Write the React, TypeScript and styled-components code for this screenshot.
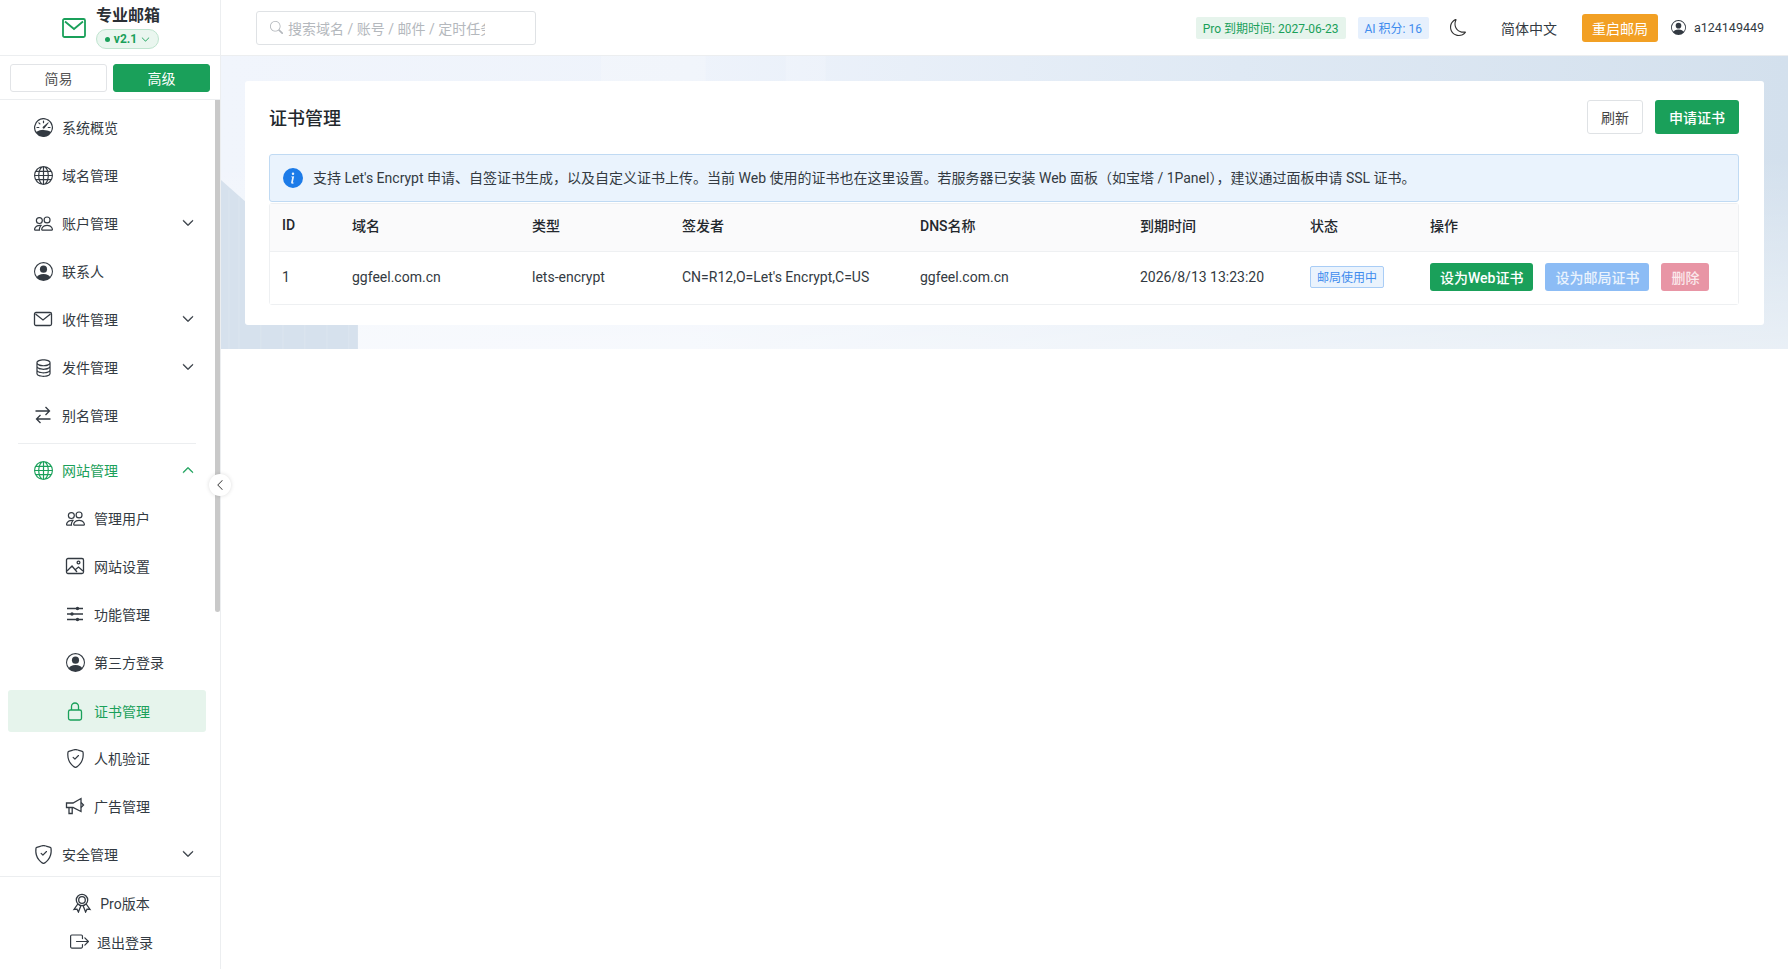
import { ReactNode } from "react";
import styled, { createGlobalStyle } from "styled-components";
import {
  BsBoxArrowRight,
  BsChevronDown,
  BsChevronLeft,
  BsChevronUp,
  BsDatabase,
  BsGlobe,
  BsInfoCircleFill,
  BsMoon,
  BsPeople,
  BsPersonCircle,
  BsSearch,
  BsShieldCheck,
  BsSpeedometer,
} from "react-icons/bs";

const GREEN = "#1aa05a";
const TEXT = "#333a42";

const GlobalStyle = createGlobalStyle`
  html, body, #root {
    margin: 0;
    height: 100%;
  }
  body {
    background: #fff;
    color: ${TEXT};
    font-family: Roboto, "Noto Sans CJK SC", sans-serif;
    font-size: 14px;
  }
  * {
    box-sizing: border-box;
  }
`;

const Page = styled.div`
  display: flex;
  height: 969px;
  overflow: hidden;
`;

// 左侧导航
const Sidebar = styled.aside`
  position: relative;
  flex: 0 0 220px;
  display: flex;
  flex-direction: column;
  border-right: 1px solid #eceef0;
`;

const Brand = styled.div`
  height: 56px;
  display: flex;
  align-items: center;
  padding-left: 62px;
  gap: 10px;
  border-bottom: 1px solid #eceef0;
`;

const BrandText = styled.div`
  display: flex;
  flex-direction: column;
  gap: 2px;
`;

const BrandName = styled.div`
  font-size: 16px;
  line-height: 22px;
  font-weight: 700;
  color: #2a2f35;
  margin-top: -1px;
`;

const VersionPill = styled.div`
  width: 63px;
  height: 20px;
  display: flex;
  align-items: center;
  justify-content: center;
  gap: 4px;
  font-size: 12px;
  font-weight: 700;
  color: ${GREEN};
  background: #eaf6ef;
  border: 1px solid #bfe4cf;
  border-radius: 10px;
`;

const Dot = styled.span`
  width: 5px;
  height: 5px;
  border-radius: 50%;
  background: ${GREEN};
`;

const ModeBar = styled.div`
  height: 44px;
  display: flex;
  gap: 6px;
  padding: 8px 10px 0;
  border-bottom: 1px solid #eceef0;
`;

const ModeButton = styled.div<{ $active?: boolean }>`
  width: 97px;
  height: 28px;
  display: flex;
  align-items: center;
  justify-content: center;
  border-radius: 3px;
  background: ${(p) => (p.$active ? GREEN : "#fff")};
  color: ${(p) => (p.$active ? "#fff" : "#555")};
  border: 1px solid ${(p) => (p.$active ? GREEN : "#e2e4e7")};
`;

const Nav = styled.nav`
  position: relative;
  flex: 1;
  min-height: 0;
  overflow: hidden;
  padding-top: 3px;
`;

const Scrollbar = styled.div`
  position: absolute;
  top: 0;
  right: 0;
  width: 5px;
  height: 512px;
  background: #c9c9c9;
  border-radius: 0 0 3px 3px;
`;

const NavItem = styled.div<{ $active?: boolean; $sub?: boolean }>`
  height: 48px;
  display: flex;
  align-items: center;
  gap: 9px;
  padding-left: ${(p) => (p.$sub ? "65px" : "33px")};
  padding-right: 26px;
  color: ${(p) => (p.$active ? GREEN : TEXT)};
`;

const ActiveSlot = styled.div`
  height: 42px;
  margin: 4px 14px 2px 8px;
  display: flex;
  align-items: center;
  gap: 9px;
  padding: 0 0 1px 57px;
  background: #e6f4ec;
  border-radius: 3px;
  color: ${GREEN};
`;

const IconBox = styled.span`
  width: 20px;
  height: 20px;
  display: inline-flex;
  align-items: center;
  justify-content: center;
  font-size: 19px;
  flex-shrink: 0;
`;

const Chevron = styled.span`
  margin-left: auto;
  display: inline-flex;
  font-size: 12px;

  svg {
    stroke: currentColor;
    stroke-width: 1;
  }
`;

const NavDivider = styled.div`
  height: 1px;
  margin: 4px 24px 2px 18px;
  background: #eceef0;
`;

const SideFooter = styled.div`
  height: 93px;
  flex-shrink: 0;
  border-top: 1px solid #eceef0;
  display: flex;
  flex-direction: column;
  align-items: center;
  padding-top: 6px;
`;

const FooterLink = styled.div`
  height: 39px;
  display: flex;
  align-items: center;
  gap: 8px;
  padding-left: 2px;
`;

const CollapseToggle = styled.div`
  position: absolute;
  left: 209px;
  top: 474px;
  width: 22px;
  height: 22px;
  border-radius: 50%;
  background: #fff;
  box-shadow: 0 0 4px rgba(0, 0, 0, 0.14);
  display: flex;
  align-items: center;
  justify-content: center;
  font-size: 12px;
  color: #333;
`;

// 主区域
const Main = styled.main`
  flex: 1;
  min-width: 0;
  display: flex;
  flex-direction: column;
`;

const Header = styled.header`
  height: 56px;
  flex-shrink: 0;
  display: flex;
  align-items: center;
  padding: 0 24px 0 35px;
  border-bottom: 1px solid #eceef0;
`;

const SearchBox = styled.div`
  width: 280px;
  height: 34px;
  display: flex;
  align-items: center;
  gap: 5px;
  padding-left: 13px;
  border: 1px solid #dfe2e5;
  border-radius: 3px;
  color: #b4b8bd;
`;

const SearchText = styled.span`
  width: 197px;
  overflow: hidden;
  white-space: nowrap;
`;

const HeaderRight = styled.div`
  margin-left: auto;
  display: flex;
  align-items: center;
`;

const Tag = styled.span<{ $bg: string; $fg: string }>`
  height: 22px;
  display: inline-flex;
  align-items: center;
  padding: 0 7px;
  font-size: 12px;
  border-radius: 2px;
  background: ${(p) => p.$bg};
  color: ${(p) => p.$fg};
  margin-right: 12px;
`;

const Moon = styled.span`
  display: inline-flex;
  font-size: 17px;
  color: #333;
  margin: 0 34px 0 9px;
`;

const Lang = styled.span`
  margin-right: 25px;
`;

const RestartButton = styled.div`
  width: 76px;
  height: 28px;
  display: flex;
  align-items: center;
  justify-content: center;
  background: #f2a024;
  color: #fff;
  border-radius: 3px;
  margin-right: 13px;
`;

const UserBox = styled.div`
  display: flex;
  align-items: center;
  gap: 8px;
  font-size: 12.5px;
`;

const Hero = styled.section`
  position: relative;
  padding: 25px 24px 24px 24px;
  background:
    linear-gradient(180deg, rgba(255, 255, 255, 0) 35%, rgba(255, 255, 255, 0.5) 100%),
    linear-gradient(90deg, #f1f5fc 0%, #eef3fb 30%, #dfe9f4 65%, #d3e0ed 100%);
`;

const Backdrop = styled.svg`
  position: absolute;
  left: 0;
  top: 0;
  width: 100%;
  height: 100%;
`;

const Card = styled.div`
  position: relative;
  background: #fff;
  border-radius: 3px;
  padding: 19px 25px 20px 24px;
`;

const CardHead = styled.div`
  height: 34px;
  display: flex;
  align-items: center;
  justify-content: space-between;
  margin-bottom: 20px;
`;

const CardTitle = styled.h2`
  margin: 0 0 1px;
  font-size: 18px;
  font-weight: 500;
  color: #23282d;
`;

const ButtonRow = styled.div`
  display: flex;
  gap: 12px;
`;

type ButtonVariant = "outline" | "green" | "blue" | "red";

const buttonColors: Record<ButtonVariant, string> = {
  outline: "background:#fff;border:1px solid #dfe2e5;color:#444;font-weight:400;padding:0 13px;",
  green: `background:${GREEN};color:#fff;`,
  blue: "background:#8cbcf5;color:#eaf3fd;",
  red: "background:#e895a5;color:#fbe9ec;",
};

const Button = styled.div<{ $variant?: ButtonVariant; $tall?: boolean }>`
  display: flex;
  align-items: center;
  justify-content: center;
  height: ${(p) => (p.$tall ? "34px" : "28px")};
  padding: 0 ${(p) => (p.$tall ? "14px" : "10px")};
  border-radius: 3px;
  font-weight: 500;
  white-space: nowrap;
  ${(p) => buttonColors[p.$variant ?? "green"]}
`;

const Alert = styled.div`
  height: 48px;
  display: flex;
  align-items: center;
  gap: 10px;
  padding: 0 0 2px 13px;
  background: #eaf3fd;
  border: 1px solid #c0daf3;
  border-radius: 3px;
  margin-bottom: 1px;
`;

const InfoIcon = styled.span`
  display: inline-flex;
  font-size: 20px;
  color: #1c7be8;
  margin-top: 2px;
`;

const Table = styled.div`
  border: 1px solid #eef0f2;
  border-radius: 3px;
`;

const Row = styled.div<{ $head?: boolean }>`
  height: ${(p) => (p.$head ? "48px" : "52px")};
  display: grid;
  grid-template-columns: 70px 180px 150px 238px 220px 170px 120px 1fr;
  align-items: center;
  padding: 0 0 ${(p) => (p.$head ? "5px" : "3px")} 12px;
  background: ${(p) => (p.$head ? "#fafafb" : "#fff")};
  font-weight: ${(p) => (p.$head ? 500 : 400)};
  color: ${(p) => (p.$head ? "#23282d" : TEXT)};
  border-bottom: ${(p) => (p.$head ? "1px solid #eef0f2" : "none")};
`;

const StatusTag = styled.span`
  width: 74px;
  height: 22px;
  display: inline-flex;
  align-items: center;
  justify-content: center;
  font-size: 12px;
  color: #3f8cee;
  background: #eaf3fd;
  border: 1px solid #a9cdf6;
  border-radius: 2px;
`;

// 图标包里没有完全一致的，手画
const LineIcon = ({ children, size = 20 }: { children: ReactNode; size?: number }) => (
  <svg width={size} height={size} viewBox="0 0 20 20" fill="none" stroke="currentColor" strokeWidth="1.3">
    {children}
  </svg>
);

const MailIcon = () => (
  <LineIcon>
    <rect x="1.5" y="3.5" width="17" height="13" rx="1.5" />
    <path d="M2.5 5 10 11l7.5-6" />
  </LineIcon>
);

const SwapIcon = () => (
  <LineIcon>
    <path d="M2.5 7h14M12.5 3l4 4-4 4" transform="translate(0 -1)" />
    <path d="M17.5 13.5h-14M7.5 9.5l-4 4 4 4" transform="translate(0 0.5)" />
  </LineIcon>
);

const PictureIcon = () => (
  <LineIcon>
    <rect x="1.5" y="2.5" width="17" height="15" rx="1.5" />
    <circle cx="13.5" cy="6.5" r="1.4" />
    <path d="M2 15l5-5 5 6M10.5 13.5l3-2.5 4.5 4" />
  </LineIcon>
);

const SlidersIcon = () => (
  <LineIcon>
    <path d="M2 4.5h16M2 10h16M2 15.5h16" />
    <circle cx="12.5" cy="4.5" r="1.7" fill="currentColor" stroke="none" />
    <circle cx="7" cy="10" r="1.7" fill="currentColor" stroke="none" />
    <circle cx="12.5" cy="15.5" r="1.7" fill="currentColor" stroke="none" />
  </LineIcon>
);

const LockIcon = () => (
  <LineIcon>
    <rect x="3.5" y="9" width="13" height="10" rx="1.8" />
    <path d="M6.5 9V5.5a3.5 3.5 0 0 1 7 0V9" />
  </LineIcon>
);

const MegaphoneIcon = () => (
  <LineIcon>
    <path d="M1.5 7h6.5l8-4.5v13L8 11.5H1.5z" />
    <path d="M4 11.5v6h3.2v-6M16 6.5 18.5 9 16 11.5" />
  </LineIcon>
);

const RibbonIcon = () => (
  <LineIcon>
    <circle cx="10" cy="7" r="5.7" />
    <circle cx="10" cy="7" r="3.3" />
    <path d="M5.8 11 2 16.5l3-.3 1.4 2.8 2.4-6M14.2 11l3.8 5.5-3-.3-1.4 2.8-2.4-6" />
  </LineIcon>
);

type MenuEntry = {
  label: string;
  icon: ReactNode;
  sub?: boolean;
  active?: boolean;
  chevron?: "down" | "up";
  slot?: boolean;
  dividerBefore?: boolean;
};

const menu: MenuEntry[] = [
  { label: "系统概览", icon: <BsSpeedometer /> },
  { label: "域名管理", icon: <BsGlobe /> },
  { label: "账户管理", icon: <BsPeople />, chevron: "down" },
  { label: "联系人", icon: <BsPersonCircle /> },
  { label: "收件管理", icon: <MailIcon />, chevron: "down" },
  { label: "发件管理", icon: <BsDatabase />, chevron: "down" },
  { label: "别名管理", icon: <SwapIcon /> },
  { label: "网站管理", icon: <BsGlobe />, chevron: "up", active: true, dividerBefore: true },
  { label: "管理用户", icon: <BsPeople />, sub: true },
  { label: "网站设置", icon: <PictureIcon />, sub: true },
  { label: "功能管理", icon: <SlidersIcon />, sub: true },
  { label: "第三方登录", icon: <BsPersonCircle />, sub: true },
  { label: "证书管理", icon: <LockIcon />, sub: true, slot: true },
  { label: "人机验证", icon: <BsShieldCheck />, sub: true },
  { label: "广告管理", icon: <MegaphoneIcon />, sub: true },
  { label: "安全管理", icon: <BsShieldCheck />, chevron: "down" },
];

const App = () => {
  return (
    <>
      <GlobalStyle />
      <Page>
        <Sidebar>
          <Brand>
            <svg width="24" height="20" viewBox="0 0 24 20" fill="none" stroke={GREEN} strokeWidth="1.8">
              <rect x="1" y="1" width="22" height="18" rx="1.5" />
              <path d="M3 3.5 12 11l9-7.5" />
            </svg>
            <BrandText>
              <BrandName>专业邮箱</BrandName>
              <VersionPill>
                <Dot />
                v2.1
                <BsChevronDown size={9} />
              </VersionPill>
            </BrandText>
          </Brand>
          <ModeBar>
            <ModeButton>简易</ModeButton>
            <ModeButton $active>高级</ModeButton>
          </ModeBar>
          <Nav>
            <Scrollbar />
            {menu.map((item) =>
              item.slot ? (
                <ActiveSlot key={item.label}>
                  <IconBox>{item.icon}</IconBox>
                  {item.label}
                </ActiveSlot>
              ) : (
                <div key={item.label}>
                  {item.dividerBefore && <NavDivider />}
                  <NavItem $active={item.active} $sub={item.sub}>
                    <IconBox>{item.icon}</IconBox>
                    {item.label}
                    {item.chevron && (
                      <Chevron>{item.chevron === "down" ? <BsChevronDown /> : <BsChevronUp />}</Chevron>
                    )}
                  </NavItem>
                </div>
              )
            )}
          </Nav>
          <SideFooter>
            <FooterLink>
              <IconBox>
                <RibbonIcon />
              </IconBox>
              Pro版本
            </FooterLink>
            <FooterLink>
              <IconBox>
                <BsBoxArrowRight />
              </IconBox>
              退出登录
            </FooterLink>
          </SideFooter>
          <CollapseToggle>
            <BsChevronLeft />
          </CollapseToggle>
        </Sidebar>
        <Main>
          <Header>
            <SearchBox>
              <BsSearch size={13} />
              <SearchText>搜索域名 / 账号 / 邮件 / 定时任务</SearchText>
            </SearchBox>
            <HeaderRight>
              <Tag $bg="#e6f4ec" $fg={GREEN}>Pro 到期时间: 2027-06-23</Tag>
              <Tag $bg="#e6f0fd" $fg="#3f8cee">AI 积分: 16</Tag>
              <Moon>
                <BsMoon />
              </Moon>
              <Lang>简体中文</Lang>
              <RestartButton>重启邮局</RestartButton>
              <UserBox>
                <BsPersonCircle size={15} />
                a124149449
              </UserBox>
            </HeaderRight>
          </Header>
          <Hero>
            <Backdrop viewBox="0 0 1568 293" preserveAspectRatio="none">
              <polygon points="0,124 26,147 26,293 0,293" fill="#d6e1ed" />
              <rect x="0" y="268" width="137" height="25" fill="#d6e1ed" />
              <path d="M8 134V293M18 141V293M40 268V293M62 268V293M84 268V293M106 268V293M128 268V293" stroke="#dce5ef" strokeWidth="1" />
              <rect x="380" y="0" width="105" height="25" fill="#fff" opacity="0.18" />
              <rect x="565" y="0" width="40" height="25" fill="#fff" opacity="0.18" />
            </Backdrop>
            <Card>
              <CardHead>
                <CardTitle>证书管理</CardTitle>
                <ButtonRow>
                  <Button $variant="outline" $tall>刷新</Button>
                  <Button $tall>申请证书</Button>
                </ButtonRow>
              </CardHead>
              <Alert>
                <InfoIcon>
                  <BsInfoCircleFill />
                </InfoIcon>
                支持 Let's Encrypt 申请、自签证书生成，以及自定义证书上传。当前 Web 使用的证书也在这里设置。若服务器已安装 Web 面板（如宝塔 / 1Panel），建议通过面板申请 SSL 证书。
              </Alert>
              <Table>
                <Row $head>
                  <span>ID</span>
                  <span>域名</span>
                  <span>类型</span>
                  <span>签发者</span>
                  <span>DNS名称</span>
                  <span>到期时间</span>
                  <span>状态</span>
                  <span>操作</span>
                </Row>
                <Row>
                  <span>1</span>
                  <span>ggfeel.com.cn</span>
                  <span>lets-encrypt</span>
                  <span>CN=R12,O=Let's Encrypt,C=US</span>
                  <span>ggfeel.com.cn</span>
                  <span>2026/8/13 13:23:20</span>
                  <span>
                    <StatusTag>邮局使用中</StatusTag>
                  </span>
                  <ButtonRow>
                    <Button>设为Web证书</Button>
                    <Button $variant="blue">设为邮局证书</Button>
                    <Button $variant="red">删除</Button>
                  </ButtonRow>
                </Row>
              </Table>
            </Card>
          </Hero>
        </Main>
      </Page>
    </>
  );
};

export default App;
